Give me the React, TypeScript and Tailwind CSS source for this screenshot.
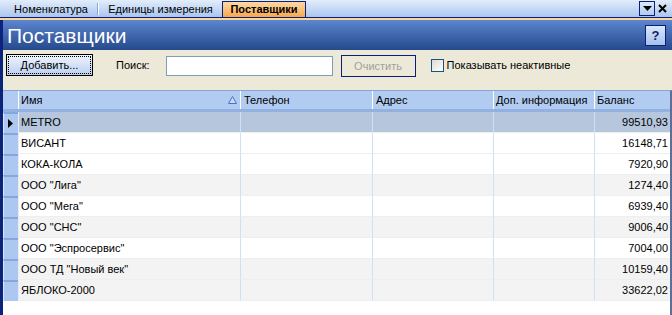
import React from "react";

const rows: { name: string; bal: string; bg: string }[] = [
  { name: "METRO", bal: "99510,93", bg: "bg-[#b5c6dd]" },
  { name: "ВИСАНТ", bal: "16148,71", bg: "bg-white" },
  { name: "КОКА-КОЛА", bal: "7920,90", bg: "bg-white" },
  { name: 'ООО "Лига"', bal: "1274,40", bg: "bg-[#f3f3f3]" },
  { name: 'ООО "Мега"', bal: "6939,40", bg: "bg-white" },
  { name: 'ООО "СНС"', bal: "9006,40", bg: "bg-[#f3f3f3]" },
  { name: 'ООО "Эспросервис"', bal: "7004,00", bg: "bg-white" },
  { name: 'ООО ТД "Новый век"', bal: "10159,40", bg: "bg-[#f3f3f3]" },
  { name: "ЯБЛОКО-2000", bal: "33622,02", bg: "bg-[#f3f3f3]" },
];

export default function App() {
  return (
    <div
      className="w-[672px] h-[315px] overflow-hidden bg-white text-[11px] text-black flex flex-col"
      style={{ fontFamily: '"Liberation Sans", Arial, sans-serif' }}
    >
      {/* Tab strip */}
      <div className="h-[18px] shrink-0 flex items-end bg-gradient-to-b from-[#e3edfb] to-[#aac6ef] border-b border-[#0b1f7a] pl-[5px] pr-[3px]">
        <div className="w-[92px] h-[16px] flex items-center justify-center">Номенклатура</div>
        <div className="h-[16px] flex items-center">
          <div className="w-px h-[12px] bg-[#8ea6cc]" />
          <div className="w-px h-[12px] bg-white" />
        </div>
        <div className="w-[123px] h-[16px] flex items-center justify-center">Единицы измерения</div>
        <div className="w-[84px] h-[16px] flex items-center justify-center font-bold border border-b-0 border-[#0b1f7a] bg-gradient-to-b from-[#fed9a4] to-[#f6a74a]">
          Поставщики
        </div>
        <div className="ml-auto self-start mt-[1px] flex items-center">
          <div className="w-[16px] h-[15px] border border-[#0b1f7a] flex items-center justify-center">
            <svg width="9" height="5" viewBox="0 0 9 5">
              <polygon points="0,0 9,0 4.5,5" fill="#000" />
            </svg>
          </div>
          <div className="w-[13px] h-[15px] flex items-center justify-center ml-[1px]">
            <svg width="9" height="9" viewBox="0 0 9 9">
              <path d="M1 1 L8 8 M8 1 L1 8" stroke="#000" strokeWidth="2" />
            </svg>
          </div>
        </div>
      </div>
      <div className="h-[2px] shrink-0 bg-[#fbd69c]" />

      <div className="flex-1 flex flex-col border-l-[3px] border-[#0b237a] min-h-0">
        {/* Header panel */}
        <div className="h-[30px] shrink-0 flex items-center justify-between bg-gradient-to-b from-[#5c86cf] to-[#26498d] pl-[4px] pr-[6px]">
          <div className="text-white text-[21px] leading-none mt-[1px]">Поставщики</div>
          <div className="w-[21px] h-[21px] border border-[#0b1f7a] bg-gradient-to-b from-[#dbe7fb] to-[#a6c1ec] flex items-center justify-center mt-[1px]">
            <span className="font-bold text-[13px] text-[#13216a] leading-none">?</span>
          </div>
        </div>

        {/* Toolbar */}
        <div className="h-[40px] shrink-0 bg-[#ece9d8] flex items-start pt-[4px]">
          <div className="ml-[3px] w-[87px] h-[22px] border border-black bg-gradient-to-b from-[#f0f5fd] to-[#b9cfef] p-[1px]">
            <div className="w-full h-full border border-dotted border-black flex items-center justify-center">
              Добавить...
            </div>
          </div>
          <div className="ml-[23px] h-[22px] flex items-center">Поиск:</div>
          <div className="ml-[16px] mt-[2px] w-[167px] h-[20px] border border-[#7f9db9] bg-white" />
          <div className="ml-[8px] mt-[1px] w-[75px] h-[22px] border border-[#0b1f7a] flex items-center justify-center text-[#a2a09a]">
            Очистить
          </div>
          <div className="ml-[15px] h-[22px] flex items-center">
            <div className="w-[13px] h-[13px] border border-[#1c5180] bg-gradient-to-br from-[#dcdcd5] to-white" />
            <span className="ml-[3px]">Показывать неактивные</span>
          </div>
        </div>

        {/* Grid */}
        <div className="flex-1 flex flex-col border-t border-[#8aa5d4] border-r-2 border-r-[#5d6f96] bg-white min-h-0">
          {/* Header row */}
          <div className="h-[21px] shrink-0 flex bg-[#b1cbf1] border-b-[3px] border-[#92b1e1]">
            <div className="w-[16px] flex">
              <div className="flex-1" />
              <div className="w-px bg-white" />
            </div>
            <div className="w-[221px] flex items-center pl-[2px] pt-[1px] relative">
              Имя
              <svg className="absolute right-[3px] top-[5px]" width="9" height="8" viewBox="0 0 9 8">
                <polygon points="4.5,0.5 8.5,7.5 0.5,7.5" fill="#c9daf5" stroke="#4a72c0" strokeWidth="1" />
              </svg>
            </div>
            <div className="w-[132px] flex items-center pt-[1px] border-l border-white pl-[3px]">Телефон</div>
            <div className="w-[121px] flex items-center pt-[1px] border-l border-white pl-[3px]">Адрес</div>
            <div className="w-[101px] flex items-center pt-[1px] border-l border-white pl-[2px]">Доп. информация</div>
            <div className="w-[76px] flex items-center pt-[1px] border-l border-white pl-[2px]">Баланс</div>
          </div>

          {/* Rows */}
          {rows.map((r, i) => (
            <div key={i} className={`h-[21px] shrink-0 flex ${r.bg}`}>
              <div className="w-[16px] flex">
                <div className="flex-1 bg-[#adc8f0] border-t-2 border-[#87a7db] border-l border-l-[#dbe6f7] flex items-center">
                  {i === 0 && (
                    <svg className="ml-[4px]" width="5" height="9" viewBox="0 0 5 9">
                      <polygon points="0,0 5,4.5 0,9" fill="#000" />
                    </svg>
                  )}
                </div>
                <div className="w-px bg-[#e3ecf9]" />
              </div>
              <div className="w-[221px] flex items-center pl-[2px] border-b border-[#eeeeee]">{r.name}</div>
              <div className="w-[132px] border-l border-[#cde0f7] border-b border-b-[#eeeeee]" />
              <div className="w-[121px] border-l border-[#cde0f7] border-b border-b-[#eeeeee]" />
              <div className="w-[101px] border-l border-[#cde0f7] border-b border-b-[#eeeeee]" />
              <div className="w-[76px] border-l border-[#cde0f7] border-b border-b-[#eeeeee] flex items-center justify-end pr-[2px]">
                {r.bal}
              </div>
            </div>
          ))}
          <div className="flex-1" />
        </div>
      </div>
    </div>
  );
}
